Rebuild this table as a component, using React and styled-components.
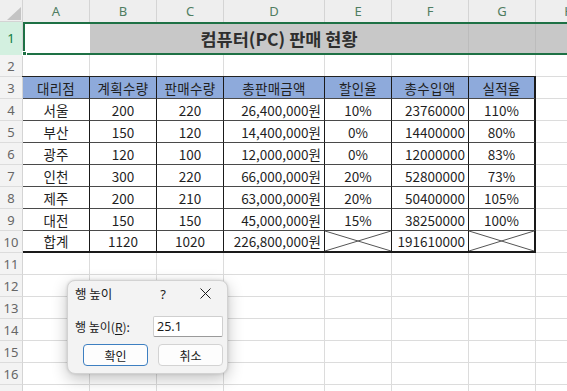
import React from 'react'
import styled, { createGlobalStyle, css } from 'styled-components'

const GlobalStyle = createGlobalStyle`
  html, body {
    margin: 0;
    padding: 0;
    background: #fff;
  }
  body {
    font-family: "Noto Sans CJK KR", "Noto Sans", sans-serif;
    color: #1f1f1f;
  }
`

const COLS = ['A', 'B', 'C', 'D', 'E', 'F', 'G', 'H']

const HEAD = ['대리점', '계획수량', '판매수량', '총판매금액', '할인율', '총수입액', '실적율']

const ROWS = [
  ['서울', '200', '220', '26,400,000원', '10%', '23760000', '110%'],
  ['부산', '150', '120', '14,400,000원', '0%', '14400000', '80%'],
  ['광주', '120', '100', '12,000,000원', '0%', '12000000', '83%'],
  ['인천', '300', '220', '66,000,000원', '20%', '52800000', '73%'],
  ['제주', '200', '210', '63,000,000원', '20%', '50400000', '105%'],
  ['대전', '150', '150', '45,000,000원', '15%', '38250000', '100%'],
  ['합계', '1120', '1020', '226,800,000원', null, '191610000', null],
]

const ALIGN = ['center', 'center', 'center', 'right', 'center', 'right', 'center']

const Sheet = styled.div`
  position: relative;
  display: grid;
  grid-template-columns: 23px 67px 67px 67px 101px 67px 77px 67px 67px;
  grid-template-rows: 22px 33px repeat(16, 22px);
  width: 567px;
  height: 391px;
  overflow: hidden;
  background: #fff;
`

const Corner = styled.div`
  background: #efefef;
  border-right: 1px solid #d4d4d4;
  border-bottom: 1px solid #d4d4d4;
  box-sizing: border-box;
  display: flex;
  align-items: flex-end;
  justify-content: flex-end;
  padding: 0 1px 1px 0;
`

const ColHeader = styled.div`
  background: #eeeeee;
  border-right: 1px solid #d4d4d4;
  box-sizing: border-box;
  display: flex;
  align-items: center;
  justify-content: center;
  font-family: "Noto Sans", "Liberation Sans", sans-serif;
  font-size: 13px;
  color: #4f7d61;
`

const RowHeader = styled.div`
  background: ${(p) => (p.$active ? '#d3f0e0' : '#f3f3f3')};
  border-right: 1px solid #d4d4d4;
  border-bottom: 1px solid ${(p) => (p.$active ? 'transparent' : '#dcdcdc')};
  box-sizing: border-box;
  display: flex;
  align-items: center;
  justify-content: center;
  font-family: "Noto Sans", "Liberation Sans", sans-serif;
  font-size: 13px;
  color: ${(p) => (p.$active ? '#107c41' : '#666')};
`

const Cell = styled.div`
  border-right: 1px solid #dcdcdc;
  border-bottom: 1px solid #dcdcdc;
  box-sizing: border-box;
`

const SelectedRow = styled.div`
  position: relative;
  grid-column: 2 / -1;
  display: grid;
  grid-template-columns: 65px 379px 67px 1fr;
  border: 2px solid #1e7145;
  border-right: none;
  box-sizing: border-box;
`

const Handle = styled.span`
  position: absolute;
  left: -3px;
  bottom: -3px;
  width: 5px;
  height: 5px;
  background: #1e7145;
  border: 1px solid #fff;
  box-sizing: border-box;
`

const ActiveCell = styled.div`
  background: #fff;
`

const Shade = styled.div`
  background: #c8c8c8;
  border-right: 1px solid #bcbcbc;
  display: flex;
  align-items: center;
  justify-content: center;
  font-size: 17.5px;
  font-weight: 700;
  color: #2e2e2e;
`

const Table = styled.div`
  grid-column: 2 / 9;
  grid-row: 4 / 12;
  margin: -1px 0 0 -1px;
  display: grid;
  grid-template-columns: 67px 67px 67px 101px 67px 77px 67px;
  grid-template-rows: repeat(8, 22px);
  border-top: 1px solid #222;
  border-left: 1px solid #222;
  background: #fff;
`

const TCell = styled.div`
  position: relative;
  box-sizing: border-box;
  display: flex;
  align-items: center;
  justify-content: ${(p) => (p.$align === 'right' ? 'flex-end' : 'center')};
  padding: 0 ${(p) => (p.$align === 'right' ? '3px' : '0')} 0 0;
  border-right: ${(p) => (p.$last ? '2px' : '1px')} solid #1a1a1a;
  border-bottom: ${(p) => (p.$bottom ? '2px solid #1a1a1a' : '1px solid #4a4a4a')};
  font-size: 13.5px;
  color: #1f1f1f;
  white-space: nowrap;
  ${(p) =>
    p.$head &&
    css`
      background: #8eaadb;
      letter-spacing: 0.3px;
    `}
`

const Cross = styled.svg`
  position: absolute;
  inset: 0;
  width: 100%;
  height: 100%;
`

const Dialog = styled.div`
  position: absolute;
  left: 67px;
  top: 280px;
  width: 161px;
  height: 94px;
  box-sizing: border-box;
  background: #f3f3f3;
  border: 1px solid #d2d2d2;
  border-radius: 8px;
  box-shadow: 0 5px 16px rgba(0, 0, 0, 0.24), 0 0 3px rgba(0, 0, 0, 0.14);
  display: flex;
  flex-direction: column;
  font-size: 12px;
  color: #1a1a1a;
`

const TitleBar = styled.div`
  display: flex;
  align-items: center;
  height: 25px;
  padding-left: 7px;
`

const TitleText = styled.span`
  flex: 1;
  font-size: 12.5px;
`

const TitleButton = styled.span`
  width: 40px;
  display: flex;
  justify-content: center;
  align-items: center;
  font-family: "Noto Sans", "Liberation Sans", sans-serif;
  font-size: 13px;
  margin-right: ${(p) => p.$mr || 0}px;
`

const Field = styled.div`
  display: flex;
  align-items: center;
  margin-top: 10px;
  padding-left: 7px;
  height: 20px;
`

const Label = styled.span`
  width: 78px;
  font-size: 12px;
  u {
    text-underline-offset: 2px;
  }
`

const Input = styled.div`
  width: 70px;
  height: 21px;
  box-sizing: border-box;
  background: #fff;
  border: 1px solid #cfcfcf;
  border-bottom-color: #9a9a9a;
  border-radius: 2px;
  display: flex;
  align-items: center;
  padding-left: 3px;
  font-family: "Noto Sans", "Liberation Sans", sans-serif;
  font-size: 12.5px;
`

const Buttons = styled.div`
  display: flex;
  gap: 10px;
  margin-top: 8px;
  padding-left: 15px;
`

const Button = styled.div`
  width: 65px;
  height: 22px;
  box-sizing: border-box;
  display: flex;
  align-items: center;
  justify-content: center;
  background: #fdfdfd;
  border: 1px solid ${(p) => (p.$primary ? '#3d7fc1' : '#d3d3d3')};
  border-radius: 4px;
  font-size: 12px;
`

const App = () => {
  const cells = []

  cells.push(
    <Corner key="corner">
      <svg width="14" height="13" viewBox="0 0 14 13">
        <path d="M14 0 L14 13 L0 13 Z" fill="#c4c4c4" />
      </svg>
    </Corner>
  )
  COLS.forEach((c) => cells.push(<ColHeader key={'h' + c}>{c}</ColHeader>))

  cells.push(<RowHeader key="r1" $active>1</RowHeader>)
  cells.push(
    <SelectedRow key="sel">
      <ActiveCell />
      <Shade>컴퓨터(PC) 판매 현황</Shade>
      <Shade />
      <Shade />
      <Handle />
    </SelectedRow>
  )

  cells.push(<RowHeader key="r2">2</RowHeader>)
  COLS.forEach((c) => cells.push(<Cell key={'2' + c} />))

  cells.push(
    <Table key="table">
      {HEAD.map((h, i) => (
        <TCell key={'th' + i} $head $last={i === 6}>
          {h}
        </TCell>
      ))}
      {ROWS.map((row, r) =>
        row.map((v, i) => (
          <TCell
            key={r + '-' + i}
            $align={ALIGN[i]}
            $last={i === 6}
            $bottom={r === ROWS.length - 1}
          >
            {v === null ? (
              <Cross viewBox="0 0 100 100" preserveAspectRatio="none">
                <line x1="0" y1="0" x2="100" y2="100" stroke="#555" strokeWidth="1" vectorEffect="non-scaling-stroke" />
                <line x1="100" y1="0" x2="0" y2="100" stroke="#555" strokeWidth="1" vectorEffect="non-scaling-stroke" />
              </Cross>
            ) : (
              v
            )}
          </TCell>
        ))
      )}
    </Table>
  )

  for (let r = 3; r <= 10; r++) {
    cells.push(<RowHeader key={'r' + r}>{r}</RowHeader>)
    cells.push(<Cell key={r + 'H'} />)
  }

  for (let r = 11; r <= 17; r++) {
    cells.push(<RowHeader key={'r' + r}>{r <= 16 ? r : ''}</RowHeader>)
    COLS.forEach((c) => cells.push(<Cell key={r + c} />))
  }

  return (
    <>
      <GlobalStyle />
      <Sheet>
        {cells}
        <Dialog>
          <TitleBar>
            <TitleText>행 높이</TitleText>
            <TitleButton $mr={2}>?</TitleButton>
            <TitleButton $mr={2}>
              <svg width="11" height="11" viewBox="0 0 11 11">
                <path d="M0.5 0.5 L10.5 10.5 M10.5 0.5 L0.5 10.5" stroke="#1a1a1a" strokeWidth="1" />
              </svg>
            </TitleButton>
          </TitleBar>
          <Field>
            <Label>
              행 높이(<u>R</u>):
            </Label>
            <Input>25.1</Input>
          </Field>
          <Buttons>
            <Button $primary>확인</Button>
            <Button>취소</Button>
          </Buttons>
        </Dialog>
      </Sheet>
    </>
  )
}

export default App
